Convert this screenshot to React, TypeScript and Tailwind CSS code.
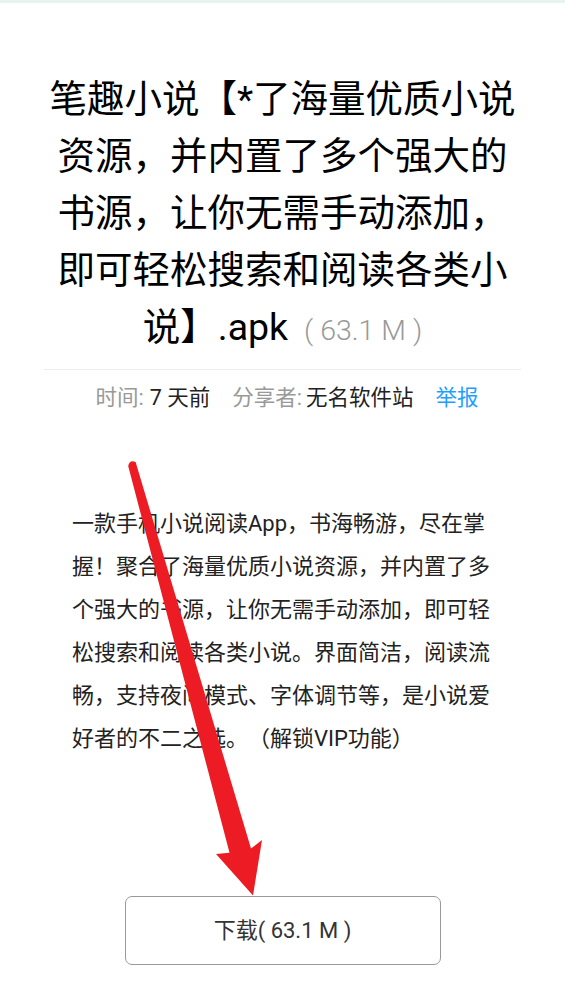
import React from 'react';

const font = '[font-family:Roboto,"Noto_Sans_CJK_SC",sans-serif] [text-spacing-trim:space-all]';

// red pointer drawn over the page
const Arrow: React.FC = () => (
  <svg className="pointer-events-none absolute left-0 top-0" width="565" height="1004" viewBox="0 0 565 1004">
    <path
      d="M128.2 466 Q129.5 459.5 135.6 462 L251 848.5 L262 840 L253 895.5 L216 854 L229.5 852.8 Z"
      fill="#ed1c24"
    />
  </svg>
);

const App: React.FC = () => {
  return (
    <div className={`relative min-h-[1004px] w-[565px] bg-white ${font}`}>
      <div className="h-[3px] bg-[#e6f3f0]" />

      <h1 className="mt-[68px] px-10 text-center text-[37.5px] font-normal leading-[57px] text-black">
        笔趣小说【*了海量优质小说资源，并内置了多个强大的书源，让你无需手动添加，即可轻松搜索和阅读各类小说】.apk
        <span className="ml-4 text-[28.5px] font-light text-[#999]">( 63.1 M )</span>
      </h1>

      <div className="mx-[44px] mt-[10px] h-px bg-[#ececec]" />

      <div className="mt-[13px] flex items-center justify-center pl-[9px] text-[21.5px] leading-[30px]">
        <span className="text-[#999]">时间:</span>
        <span className="ml-1.5 text-[#222]">7 天前</span>
        <span className="ml-[22px] text-[#999]">分享者:</span>
        <span className="ml-1 text-[#222]">无名软件站</span>
        <span className="ml-[22px] text-[#1e9fff]">举报</span>
      </div>

      <p className="mt-[89px] px-[72px] text-[22px] leading-[43px] text-[#222]">
        一款手机小说阅读App，书海畅游，尽在掌握！聚合了海量优质小说资源，并内置了多个强大的书源，让你无需手动添加，即可轻松搜索和阅读各类小说。界面简洁，阅读流畅，支持夜间模式、字体调节等，是小说爱好者的不二之选。（解锁VIP功能）
      </p>

      <div className="mt-[136px] flex justify-center pb-10">
        <button
          type="button"
          className="flex h-[69px] w-[316px] items-center justify-center rounded-[7px] border-[1.5px] border-[#999] bg-white text-[22px] text-[#333]"
        >
          下载( 63.1 M )
        </button>
      </div>

      <Arrow />
    </div>
  );
};

export default App;
